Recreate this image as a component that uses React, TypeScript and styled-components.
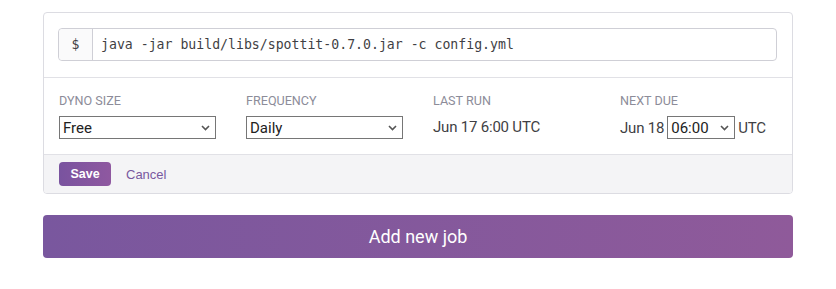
import React from "react";
import styled, { createGlobalStyle } from "styled-components";

const Global = createGlobalStyle`
  html, body { margin: 0; padding: 0; background: #fff; }
  body { font-family: Roboto, "Liberation Sans", Arial, sans-serif; color: #3f3f44; }
`;

const Page = styled.div`
  padding: 12px 43px 0 43px;
  width: 750px;
`;

const Card = styled.div`
  border: 1px solid #dcdce2;
  border-radius: 4px;
  overflow: hidden;
`;

const Header = styled.div`
  padding: 15px 15px 16px 14px;
  border-bottom: 1px solid #e1e1e6;
`;

const CommandGroup = styled.div`
  display: flex;
  height: 33px;
  border: 1px solid #cfcfd6;
  border-radius: 4px;
  box-sizing: border-box;
  font-family: "DejaVu Sans Mono", "Liberation Mono", monospace;
  font-size: 13.2px;
  color: #3f3f44;
`;

const Addon = styled.div`
  width: 33px;
  display: flex;
  align-items: center;
  justify-content: center;
  background: #fafafb;
  border-right: 1px solid #cfcfd6;
  border-radius: 4px 0 0 4px;
`;

const Command = styled.div`
  flex: 1;
  display: flex;
  align-items: center;
  padding-left: 8px;
`;

const Fields = styled.div`
  display: grid;
  grid-template-columns: repeat(4, 1fr);
  column-gap: 30px;
  padding: 15px 15px 15px 15px;
  border-bottom: 1px solid #e1e1e6;
`;

const Field = styled.div`
  display: flex;
  flex-direction: column;
`;

const Label = styled.div`
  font-size: 12.6px;
  line-height: 16px;
  color: #8c8c99;
  text-transform: uppercase;
  margin-bottom: 7px;
`;

const SelectWrap = styled.div<{ $w?: number }>`
  position: relative;
  width: ${(p) => (p.$w ? `${p.$w}px` : "100%")};
  height: 23px;
`;

const Select = styled.select`
  appearance: none;
  -webkit-appearance: none;
  width: 100%;
  height: 23px;
  box-sizing: border-box;
  border: 1px solid #767676;
  border-radius: 0;
  background: #fff;
  color: #222;
  font-family: Roboto, "Liberation Sans", Arial, sans-serif;
  font-size: 15px;
  padding: 0 0 0 3px;
  margin: 0;
  outline: none;
`;

const Chevron = styled.svg`
  position: absolute;
  right: 6px;
  top: 9px;
  pointer-events: none;
`;

const Value = styled.div`
  font-size: 15px;
  line-height: 23px;
  color: #3f3f44;
  letter-spacing: -0.2px;
`;

const DueRow = styled.div`
  display: flex;
  align-items: center;
  gap: 3px;
  font-size: 15px;
  color: #3f3f44;
  letter-spacing: -0.2px;
`;

const Footer = styled.div`
  background: #f4f4f6;
  padding: 7px 15px;
  display: flex;
  align-items: center;
  gap: 15px;
`;

const SaveButton = styled.button`
  width: 52px;
  height: 24px;
  border: none;
  border-radius: 4px;
  background: linear-gradient(90deg, #79539f, #8f58a0);
  color: #fff;
  font-family: "Liberation Sans", Arial, sans-serif;
  font-weight: bold;
  font-size: 12.5px;
  padding: 0;
`;

const CancelLink = styled.a`
  color: #79589f;
  font-family: "Liberation Sans", Arial, sans-serif;
  font-size: 13px;
  text-decoration: none;
`;

const AddButton = styled.button`
  display: block;
  margin-top: 21px;
  width: 750px;
  height: 43px;
  border: none;
  border-radius: 4px;
  background: linear-gradient(90deg, #79579e, #8f5a9a);
  color: #fff;
  font-family: Roboto, "Liberation Sans", Arial, sans-serif;
  font-size: 18px;
  padding: 0;
`;

const ChevronIcon = () => (
  <Chevron width="9" height="6" viewBox="0 0 9 6">
    <path d="M1 1 L4.5 4.5 L8 1" fill="none" stroke="#555" strokeWidth="1.6" />
  </Chevron>
);

export default function App() {
  return (
    <>
      <Global />
      <Page>
        <Card>
          <Header>
            <CommandGroup>
              <Addon>$</Addon>
              <Command>java -jar build/libs/spottit-0.7.0.jar -c config.yml</Command>
            </CommandGroup>
          </Header>
          <Fields>
            <Field>
              <Label>Dyno size</Label>
              <SelectWrap>
                <Select defaultValue="Free">
                  <option>Free</option>
                  <option>Hobby</option>
                </Select>
                <ChevronIcon />
              </SelectWrap>
            </Field>
            <Field>
              <Label>Frequency</Label>
              <SelectWrap>
                <Select defaultValue="Daily">
                  <option>Daily</option>
                  <option>Hourly</option>
                </Select>
                <ChevronIcon />
              </SelectWrap>
            </Field>
            <Field>
              <Label>Last run</Label>
              <Value>Jun 17 6:00 UTC</Value>
            </Field>
            <Field>
              <Label>Next due</Label>
              <DueRow>
                <span>Jun 18</span>
                <SelectWrap $w={68}>
                  <Select defaultValue="06:00">
                    <option>06:00</option>
                    <option>07:00</option>
                  </Select>
                  <ChevronIcon />
                </SelectWrap>
                <span>UTC</span>
              </DueRow>
            </Field>
          </Fields>
          <Footer>
            <SaveButton>Save</SaveButton>
            <CancelLink href="#">Cancel</CancelLink>
          </Footer>
        </Card>
        <AddButton>Add new job</AddButton>
      </Page>
    </>
  );
}
